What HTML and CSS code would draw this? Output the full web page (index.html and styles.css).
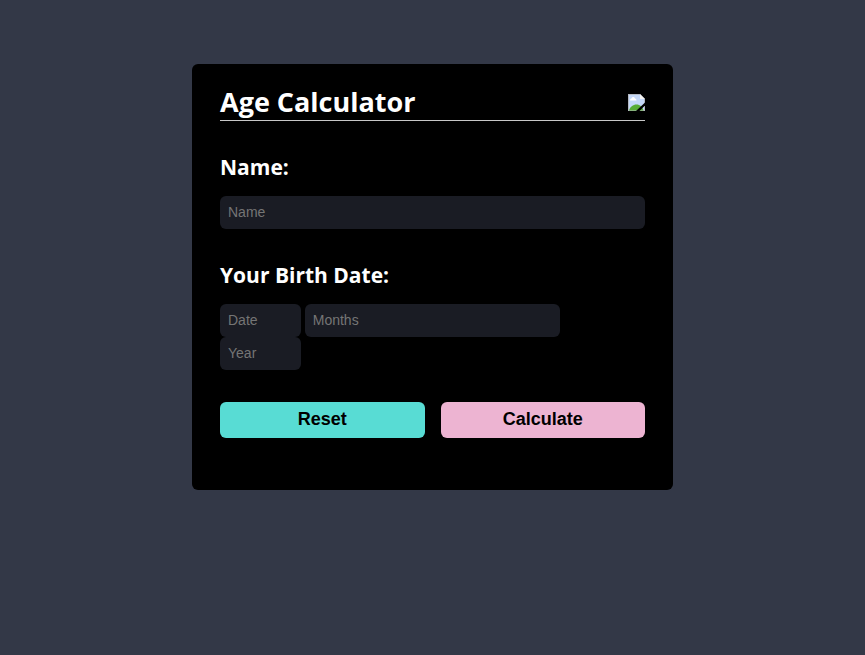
FILE: index.html
```html
<!DOCTYPE html>
<html lang="en">

<head>
  <meta charset="UTF-8">
  <meta name="viewport" content="width=device-width, initial-scale=1.0">
  <title>Age Calculator</title>
  <link rel="stylesheet" href="styles.css">
</head>

<body>
  <form class="container">
    <div class="header">
      <h1>Age Calculator</h1>
      <svg class="logo" viewBox="0 0 17 17" aria-hidden="true">
        <path d="M0 0H12L17 5V17H0Z" fill="#b4b9c2" />
        <path d="M1 1H12L16 5V16H1Z" fill="#c5d8f8" />
        <path d="M12 0V5H17Z" fill="#f4f4f4" />
        <path d="M2 6.500C2 5 3 4.500 3.500 4.500C4 2.500 6.500 2.500 7 4.500C8 4.500 8.500 5.500 8.500 6.500Z" fill="#fff" />
        <path d="M1 16.500C2 13 5 10.500 8.500 10.500C12 10.500 14.500 13 15.500 16.500Z" fill="#58ac35" />
        <path d="M17 8.500V11.500L11.500 17H8Z" fill="#000" />
      </svg>
    </div>

    <label class="title" for="name">Name:</label>
    <input type="text" id="name" placeholder="Name">

    <label class="title" for="date">Your Birth Date:</label>
    <div class="birth">
      <input type="text" id="date" placeholder="Date">
      <input type="text" id="months" placeholder="Months" aria-label="Months">
      <input type="text" id="year" placeholder="Year" aria-label="Year">
    </div>

    <div class="buttons">
      <button class="reset" type="reset">Reset</button>
      <button class="calculate" type="button">Calculate</button>
    </div>
  </form>
</body>

</html>
```

FILE: styles.css
```css
* {
  margin: 0;
  padding: 0;
  box-sizing: border-box;
}

body {
  background-color: #333847;
  font-family: "Segoe UI", "Open Sans", sans-serif;
  padding: 64px 16px;
}

.container {
  max-width: 481px;
  margin: 0 auto;
  padding: 20px 28px 52px;
  background-color: #000;
  border-radius: 6px;
  color: #fff;
}

.header {
  display: flex;
  justify-content: space-between;
  align-items: center;
  border-bottom: 1px solid #c8c8c8;
}

h1 {
  font-size: 27px;
  line-height: 36px;
}

.logo {
  width: 17px;
  height: 17px;
}

.title {
  display: block;
  margin: 31px 0 14px;
  font-size: 21px;
  font-weight: bold;
  line-height: 30px;
}

input {
  display: block;
  width: 100%;
  height: 33px;
  padding: 0 8px 2px;
  border: none;
  border-radius: 6px;
  background-color: #1a1c24;
  color: #fff;
  font-family: "Liberation Sans", Arial, sans-serif;
  font-size: 14px;
}

input::placeholder {
  color: #757575;
}

.birth {
  display: grid;
  grid-template-columns: 19% 60%;
  column-gap: 4px;
}

.buttons {
  display: flex;
  gap: 16px;
  margin-top: 32px;
}

button {
  flex: 1;
  height: 36px;
  padding-bottom: 2px;
  border: none;
  border-radius: 6px;
  color: #000;
  font-family: "Liberation Sans", Arial, sans-serif;
  font-size: 18px;
  font-weight: bold;
  cursor: pointer;
}

.reset {
  background-color: #58dcd4;
}

.calculate {
  background-color: #edb4d2;
}
```
